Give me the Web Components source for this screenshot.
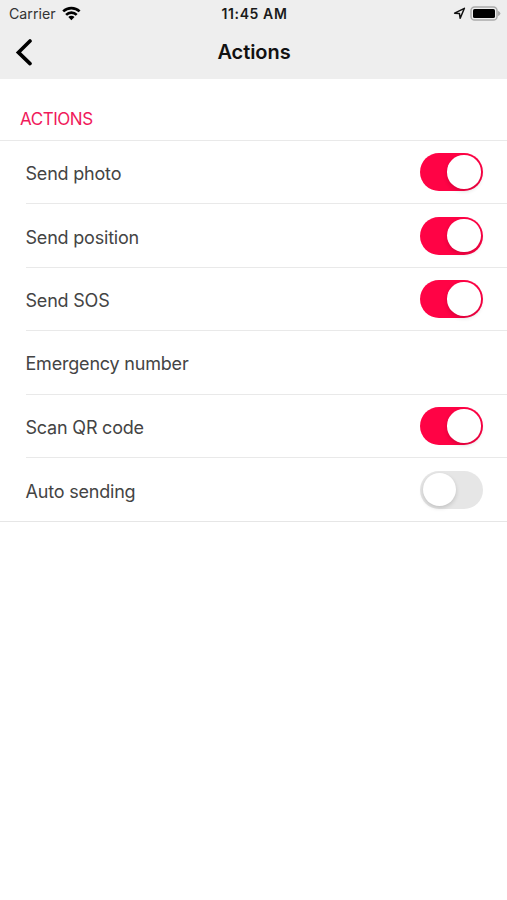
<!DOCTYPE html>
<html lang="en">
<head>
<meta charset="utf-8">
<meta name="viewport" content="width=device-width, initial-scale=1">
<title>Actions</title>
<style>
  body {
    margin: 0;
    background: #fff;
    font-family: Inter, "Liberation Sans", sans-serif;
    overflow: hidden;
  }
</style>
</head>
<body>
<app-screen>
  <status-bar slot="top" carrier="Carrier" time="11:45 AM"></status-bar>
  <nav-bar slot="top">Actions</nav-bar>
  <settings-section>
    <span slot="title">ACTIONS</span>
    <settings-row>Send photo<toggle-switch slot="control" checked></toggle-switch></settings-row>
    <settings-row>Send position<toggle-switch slot="control" checked></toggle-switch></settings-row>
    <settings-row>Send SOS<toggle-switch slot="control" checked></toggle-switch></settings-row>
    <settings-row>Emergency number</settings-row>
    <settings-row>Scan QR code<toggle-switch slot="control" checked></toggle-switch></settings-row>
    <settings-row>Auto sending<toggle-switch slot="control"></toggle-switch></settings-row>
  </settings-section>
</app-screen>

<script>
class AppScreen extends HTMLElement {
  constructor() {
    super();
    this.attachShadow({ mode: "open" });
    this.shadowRoot.innerHTML = `
      <style>
        :host {
          display: flex;
          flex-direction: column;
          height: 100vh;
          background: #fff;
        }
        header {
          height: 79px;
          background: #eee;
        }
      </style>
      <header><slot name="top"></slot></header>
      <main><slot></slot></main>
    `;
  }
}

class StatusBar extends HTMLElement {
  constructor() {
    super();
    this.attachShadow({ mode: "open" });
    this.shadowRoot.innerHTML = `
      <style>
        :host {
          display: grid;
          grid-template-columns: 1fr auto 1fr;
          align-items: center;
          height: 27px;
          padding: 0 6px 0 9px;
          box-sizing: border-box;
          font-size: 14.2px;
          color: #333;
        }
        .left, .right {
          display: flex;
          align-items: center;
        }
        .left { gap: 6px; }
        .right { gap: 4px; justify-content: flex-end; }
        #time {
          font-weight: 600;
          font-size: 14px;
          letter-spacing: 0.6px;
          margin-right: 1px;
          color: #1a1a1a;
        }
        svg { display: block; }
      </style>
      <div class="left">
        <span id="carrier"></span>
        <svg width="19" height="16" viewBox="0 0 19 16">
          <g fill="none" stroke="#000" stroke-width="2.6">
            <path d="M1.2 5.4a11.8 11.8 0 0 1 16.4 0"/>
            <path d="M4.1 8.8a7.5 7.5 0 0 1 10.6 0"/>
          </g>
          <path d="M6.3 11a4.4 4.4 0 0 1 6.2 0L9.4 14.2z"/>
        </svg>
      </div>
      <span id="time"></span>
      <div class="right">
        <svg width="13" height="13" viewBox="0 0 13 13">
          <path d="M11.4 1.3L1.6 6.2l4.8.2.8 4.9z" fill="none" stroke="#111" stroke-width="1.5" stroke-linejoin="round"/>
        </svg>
        <svg width="31" height="16" viewBox="0 0 31 16">
          <rect x="1" y="1" width="26" height="13" rx="3.6" fill="#eee" stroke="#aaa" stroke-width="1.5"/>
          <rect x="3" y="3" width="22" height="9" rx="1.6"/>
          <path d="M27.8 4.8q2.6 1 2.6 2.7t-2.6 2.7z" fill="#aaa"/>
        </svg>
      </div>
    `;
  }

  connectedCallback() {
    this.shadowRoot.querySelector("#carrier").textContent = this.getAttribute("carrier");
    this.shadowRoot.querySelector("#time").textContent = this.getAttribute("time");
  }
}

class NavBar extends HTMLElement {
  constructor() {
    super();
    this.attachShadow({ mode: "open" });
    this.shadowRoot.innerHTML = `
      <style>
        :host {
          display: grid;
          grid-template-columns: 48px 1fr 48px;
          align-items: center;
          height: 50px;
        }
        button {
          display: flex;
          padding: 0 0 0 14px;
          border: 0;
          background: none;
        }
        h1 {
          margin: 0;
          padding-left: 1px;
          text-align: center;
          font-size: 20px;
          line-height: 24px;
          font-weight: 600;
          letter-spacing: -0.05px;
          color: #111;
        }
      </style>
      <button aria-label="Back">
        <svg width="18" height="28" viewBox="0 0 18 28">
          <path d="M16 3L4.4 14.4 16 25.6" fill="none" stroke="#000" stroke-width="3.6" stroke-linecap="round" stroke-linejoin="miter"/>
        </svg>
      </button>
      <h1><slot></slot></h1>
    `;
  }
}

class SettingsSection extends HTMLElement {
  constructor() {
    super();
    this.attachShadow({ mode: "open" });
    this.shadowRoot.innerHTML = `
      <style>
        :host { display: block; }
        h2 {
          margin: 0;
          padding: 29px 20px 0;
          height: 61px;
          box-sizing: border-box;
          font-size: 17px;
          line-height: 22px;
          font-weight: 400;
          letter-spacing: -0.45px;
          color: #f01a5b;
        }
        .rows {
          border-top: 1.5px solid #e9e9e9;
          border-bottom: 1.5px solid #e6e6e6;
        }
      </style>
      <h2><slot name="title"></slot></h2>
      <div class="rows"><slot></slot></div>
    `;
  }
}

class SettingsRow extends HTMLElement {
  constructor() {
    super();
    this.attachShadow({ mode: "open" });
    this.shadowRoot.innerHTML = `
      <style>
        :host {
          display: flex;
          align-items: center;
          justify-content: space-between;
          height: 63.4px;
          margin-left: 25.5px;
          padding-right: 24px;
          box-sizing: border-box;
          border-bottom: 1px solid #e9e9e9;
          font-size: 18px;
          letter-spacing: -0.2px;
          color: #444;
        }
        :host(:last-of-type) { border-bottom: 0; }
        .label { padding-top: 3px; }
      </style>
      <span class="label"><slot></slot></span>
      <slot name="control"></slot>
    `;
  }
}

class ToggleSwitch extends HTMLElement {
  constructor() {
    super();
    this.attachShadow({ mode: "open" });
    this.shadowRoot.innerHTML = `
      <style>
        :host {
          display: flex;
          align-items: center;
          width: 63px;
          height: 38px;
          padding: 0 2.5px;
          box-sizing: border-box;
          border-radius: 19px;
          background: #e6e6e6;
          cursor: pointer;
        }
        :host([checked]) {
          justify-content: flex-end;
          background: #ff0345;
        }
        .knob {
          width: 33.5px;
          height: 33.5px;
          border-radius: 50%;
          background: #fff;
          box-shadow: 0 2px 4px rgba(0,0,0,0.16);
        }
      </style>
      <div class="knob"></div>
    `;
    this.addEventListener("click", () => this.toggleAttribute("checked"));
  }
}

customElements.define("app-screen", AppScreen);
customElements.define("status-bar", StatusBar);
customElements.define("nav-bar", NavBar);
customElements.define("settings-section", SettingsSection);
customElements.define("settings-row", SettingsRow);
customElements.define("toggle-switch", ToggleSwitch);
</script>
</body>
</html>
